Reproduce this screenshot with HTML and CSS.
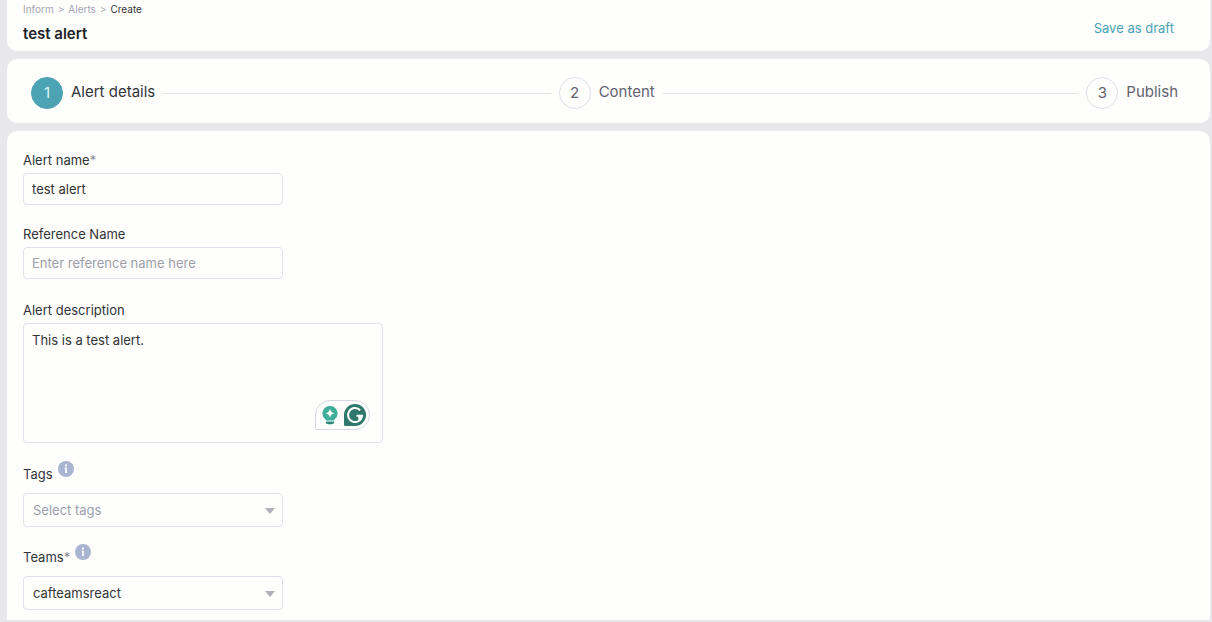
FILE: index.html
```html
<!DOCTYPE html>
<html lang="en">
  <head>
    <meta charset="UTF-8" />
    <meta name="viewport" content="width=device-width, initial-scale=1.0" />
    <title>Create Alert</title>
    <link rel="stylesheet" href="styles.css">
  </head>
  <body>
    <header class="card page-header">
      <div>
        <nav class="breadcrumb">
          <a href="#">Inform</a>
          <span>&gt;</span>
          <a href="#">Alerts</a>
          <span>&gt;</span>
          <span class="current">Create</span>
        </nav>
        <h1 class="title">test alert</h1>
      </div>
      <button type="button" class="btn-draft">Save as draft</button>
    </header>

    <ol class="card stepper">
      <li class="step active">
        <span class="step-number">1</span>
        <span class="step-label">Alert details</span>
      </li>
      <li class="step">
        <span class="step-number">2</span>
        <span class="step-label">Content</span>
      </li>
      <li class="step">
        <span class="step-number">3</span>
        <span class="step-label">Publish</span>
      </li>
    </ol>

    <form class="card alert-form">
      <div class="field">
        <label for="alert-name">Alert name<span class="required">*</span></label>
        <input type="text" id="alert-name" value="test alert" required />
      </div>

      <div class="field">
        <label for="reference-name">Reference Name</label>
        <input type="text" id="reference-name" placeholder="Enter reference name here" />
      </div>

      <div class="field field-description">
        <label for="description">Alert description</label>
        <div class="textarea-box">
          <textarea id="description" spellcheck="false">This is a test alert.</textarea>
          <div class="writing-tools">
            <svg width="18" height="22" viewBox="0 0 18 22">
              <path d="M9 2a7.500 7.500 0 0 0-5 13.100c.6.500 1 .9 1.200 1.400h7.600c.2-.5.600-.9 1.200-1.400A7.500 7.500 0 0 0 9 2z" fill="#3fae9a" />
              <path d="M9 4.700c.9 3.100 1.500 3.700 4.600 4.600-3.100.9-3.700 1.500-4.600 4.600-.9-3.100-1.500-3.700-4.600-4.600 3.100-.9 3.700-1.500 4.600-4.600z" fill="#fff" />
              <path d="M5 17.600h8v.6a2 2 0 0 1-2 2H7a2 2 0 0 1-2-2z" fill="#2f8a7a" />
            </svg>
            <svg width="22" height="22" viewBox="0 0 22 22">
              <path d="M11 0a11 11 0 1 1 0 22H1.500A1.500 1.500 0 0 1 0 20.500V11A11 11 0 0 1 11 0z" fill="#2e796c" />
              <path d="M16.200 6.300A7 7 0 1 0 18 11.800H12.500M15.300 15.800V11.800" fill="none" stroke="#fff" stroke-width="2" />
            </svg>
          </div>
        </div>
      </div>

      <div class="field field-select">
        <div class="label-row">
          <label for="tags">Tags</label>
          <svg class="info" width="16" height="16" viewBox="0 0 16 16">
            <circle cx="8" cy="8" r="8" fill="#a9b4d0" />
            <path d="M7 3.500h2v2H7zM6.500 6.500H9V12H7V7.500h-.5z" fill="#f4f6fb" />
          </svg>
        </div>
        <div class="select-box">
          <select id="tags" class="empty">
            <option>Select tags</option>
          </select>
          <svg class="arrow" width="10" height="6" viewBox="0 0 10 6"><path d="M0 0h10L5 6z" fill="#b0b1b8" /></svg>
        </div>
      </div>

      <div class="field field-select">
        <div class="label-row">
          <label for="teams">Teams<span class="required">*</span></label>
          <svg class="info" width="16" height="16" viewBox="0 0 16 16">
            <circle cx="8" cy="8" r="8" fill="#a9b4d0" />
            <path d="M7 3.500h2v2H7zM6.500 6.500H9V12H7V7.500h-.5z" fill="#f4f6fb" />
          </svg>
        </div>
        <div class="select-box">
          <select id="teams" required>
            <option>cafteamsreact</option>
          </select>
          <svg class="arrow" width="10" height="6" viewBox="0 0 10 6"><path d="M0 0h10L5 6z" fill="#b0b1b8" /></svg>
        </div>
      </div>
    </form>
  </body>
</html>
```
FILE: styles.css
```css
* {
  box-sizing: border-box;
}
body {
  margin: 0;
  padding: 0 2px 2px 7px;
  display: flex;
  flex-direction: column;
  gap: 8px;
  background-color: #e8e8ea;
  font-family: Inter, "Liberation Sans", sans-serif;
  font-size: 13px;
  line-height: 18px;
  color: #333438;
}
.card {
  background: #fefefd;
  border-radius: 10px;
}
.page-header {
  display: flex;
  justify-content: space-between;
  align-items: flex-end;
  padding: 2px 36px 7px 16px;
  border-radius: 0 0 10px 10px;
}
.breadcrumb {
  display: flex;
  gap: 4px;
  font-size: 10px;
  line-height: 14px;
  color: #a5a5b0;
}
.breadcrumb a {
  color: #a5a5b0;
  text-decoration: none;
}
.breadcrumb .current {
  color: #333438;
}
.title {
  margin: 8px 0 0;
  font-size: 15px;
  line-height: 20px;
  font-weight: 600;
  color: #222327;
}
.btn-draft {
  padding: 0 0 8px;
  border: none;
  background: none;
  font-family: inherit;
  font-size: 13px;
  color: #4ba3b4;
  cursor: pointer;
}
.stepper {
  display: flex;
  gap: 8px;
  margin: 0;
  padding: 18px 32px 14px 24px;
  list-style: none;
}
.step {
  display: flex;
  align-items: center;
  gap: 8px;
  font-size: 15px;
  color: #62636f;
}
.step:not(:last-child) {
  flex: 1 1 0;
}
.step:not(:last-child)::after {
  content: "";
  flex: 1;
  height: 1px;
  background: #e3e3ea;
}
.step-number {
  display: flex;
  justify-content: center;
  align-items: center;
  width: 32px;
  height: 32px;
  border: 1px solid #dfdfe9;
  border-radius: 50%;
}
.step-label {
  padding-bottom: 2px;
}
.step.active {
  color: #333438;
}
.step.active .step-number {
  border-color: #4ba3b4;
  background: #4ba3b4;
  color: #e4f4f6;
}
.alert-form {
  padding: 20px 16px 10px;
  border-radius: 10px 10px 0 0;
}
.field {
  display: flex;
  flex-direction: column;
  gap: 4px;
  max-width: 260px;
  margin-bottom: 20px;
}
.field-description {
  max-width: 360px;
  margin-top: 22px;
  margin-bottom: 18px;
}
.field-select {
  gap: 10px;
  margin-bottom: 17px;
}
.field-select:last-child {
  margin-bottom: 0;
}
.required {
  color: #8b8b96;
}
input,
select,
textarea {
  display: block;
  width: 100%;
  height: 32px;
  padding: 0 8px;
  border: 1px solid #e0e1e9;
  border-radius: 4px;
  background: #fefefd;
  font-family: inherit;
  font-size: 13px;
  line-height: 18px;
  color: #333438;
}
input::placeholder,
select.empty {
  color: #9d9ea9;
}
select {
  height: 34px;
  padding: 0 9px;
  appearance: none;
}
textarea {
  height: 120px;
  padding: 7px 8px;
  resize: none;
}
.textarea-box,
.select-box {
  position: relative;
}
.writing-tools {
  position: absolute;
  right: 13px;
  bottom: 13px;
  display: flex;
  justify-content: space-between;
  align-items: center;
  width: 55px;
  height: 30px;
  padding: 0 3px 0 5px;
  border: 1px solid #d5d8e2;
  border-radius: 15px 15px 15px 2px;
  background: #fefefd;
}
.label-row {
  display: flex;
  align-items: flex-end;
  gap: 5px;
  height: 22px;
}
.info {
  align-self: flex-start;
}
.arrow {
  position: absolute;
  right: 8px;
  top: 15px;
  pointer-events: none;
}
```
